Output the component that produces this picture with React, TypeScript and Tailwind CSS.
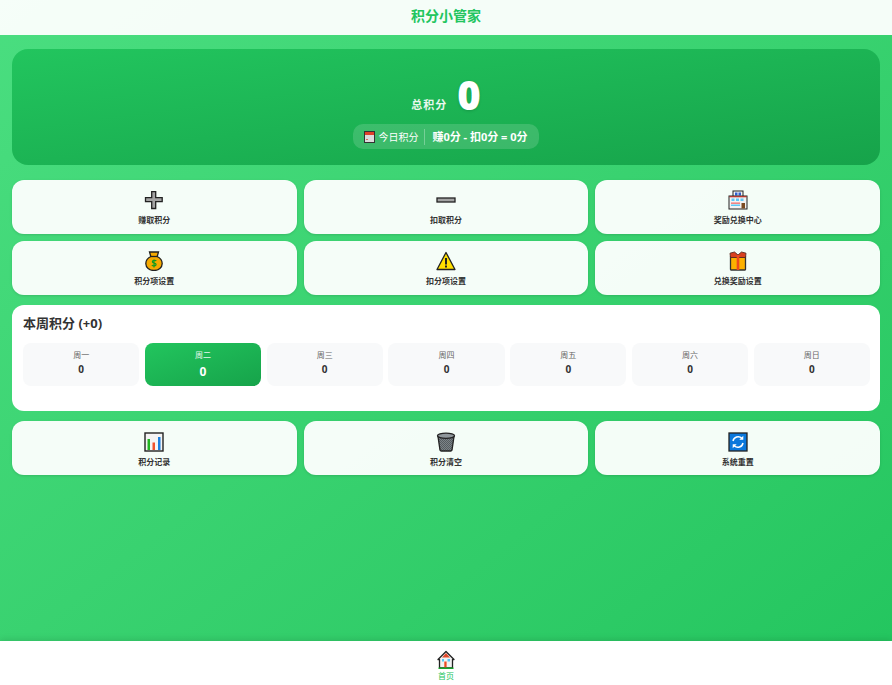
import React from "react";

const font = { fontFamily: '"Noto Sans", "Noto Sans CJK SC", sans-serif' };

function PlusIcon() {
  return (
    <svg width="20" height="20" viewBox="0 0 20 20">
      <path d="M7.700 1.700h4v6h6.500v4h-6.500v6.800h-4v-6.800H1.500v-4h6.200z" fill="#a3a3a3" stroke="#222" strokeWidth="1.300" />
    </svg>
  );
}

function MinusIcon() {
  return (
    <svg width="20" height="20" viewBox="0 0 20 20">
      <rect x="1" y="8" width="18" height="4" fill="#a3a3a3" stroke="#222" strokeWidth="1.300" />
    </svg>
  );
}

function ShopIcon() {
  return (
    <svg width="20" height="20" viewBox="0 0 20 20">
      <rect x="5" y="1" width="10" height="5.500" fill="#f2f2f2" stroke="#222" />
      <rect x="7" y="2.500" width="2.500" height="3" fill="#2f5fd0" />
      <rect x="10.500" y="2.500" width="2.500" height="3" fill="#2f5fd0" />
      <rect x="1" y="6" width="18" height="13" fill="#f2f2f2" stroke="#222" />
      <rect x="1.500" y="6" width="17" height="1.300" fill="#b3362f" />
      <rect x="3.500" y="8.500" width="3" height="2.500" fill="#5fc8f5" />
      <rect x="8" y="8.500" width="3" height="2.500" fill="#5fc8f5" />
      <rect x="12.500" y="8.500" width="3" height="2.500" fill="#5fc8f5" />
      <rect x="3" y="12.500" width="9" height="1.300" fill="#f06a6a" />
      <rect x="3" y="14.500" width="9" height="1.500" fill="#5fc8f5" />
      <rect x="13.500" y="13" width="3.500" height="5.500" fill="#7a4a21" />
    </svg>
  );
}

function BagIcon() {
  return (
    <svg width="20" height="20" viewBox="0 0 20 20">
      <path d="M5.500 1h9l-1.300 4.500c3 1.500 5 3.800 5 7 0 4-3.500 7-8.200 7s-8.200-3-8.200-7c0-3.200 2-5.500 5-7z" fill="#f6aa00" stroke="#222" strokeWidth="1.300" />
      <path d="M6.500 5.500h7" stroke="#222" strokeWidth="1.300" />
      <path d="M12.300 10c-.6-.9-3.900-1-3.900.7s3.700 1 3.700 2.800-3.500 1.700-4.200.5M10 8.500v8" fill="none" stroke="#129a20" strokeWidth="1.200" />
    </svg>
  );
}

function WarnIcon() {
  return (
    <svg width="20" height="20" viewBox="0 0 20 20">
      <path d="M10 1.500 19 18.500H1z" fill="#ffdf00" stroke="#222" strokeWidth="1.300" strokeLinejoin="round" />
      <rect x="9" y="7" width="2" height="6.500" fill="#222" />
      <rect x="9" y="14.500" width="2" height="2" fill="#222" />
    </svg>
  );
}

function GiftIcon() {
  return (
    <svg width="20" height="20" viewBox="0 0 20 20">
      <path d="M2.500 6h15v12.500a.5.500 0 0 1-.5.500H3a.5.500 0 0 1-.5-.500z" fill="#fdb100" stroke="#333" strokeWidth="1.300" />
      <path d="M2 2.200 6.500 1 10 4l3.500-3L18 2.200 17.500 6.500h-15z" fill="#d8401f" stroke="#5a2a20" strokeWidth="0.900" strokeLinejoin="round" />
      <rect x="8.700" y="4" width="2.600" height="15" fill="#ee4a1c" />
    </svg>
  );
}

function ChartIcon() {
  return (
    <svg width="20" height="20" viewBox="0 0 20 20">
      <rect x="1" y="1" width="18" height="18" fill="#f4f4f4" stroke="#222" strokeWidth="1.400" />
      <rect x="3.500" y="7" width="2.500" height="11" fill="#22b522" />
      <rect x="8.500" y="10.500" width="2.500" height="7.500" fill="#f0512d" />
      <rect x="14" y="5" width="2.500" height="13" fill="#1b7fe0" />
    </svg>
  );
}

function TrashIcon() {
  return (
    <svg width="20" height="20" viewBox="0 0 20 20">
      <defs>
        <pattern id="mesh" width="2" height="2" patternUnits="userSpaceOnUse">
          <rect width="2" height="2" fill="#7c8488" />
          <rect width="1" height="1" fill="#555c60" />
          <rect x="1" y="1" width="1" height="1" fill="#555c60" />
        </pattern>
      </defs>
      <path d="M2 4.500 4 18a1.500 1.500 0 0 0 1.500 1h9a1.500 1.500 0 0 0 1.500-1l2-13.500z" fill="url(#mesh)" stroke="#222" strokeWidth="1.300" />
      <ellipse cx="10" cy="3.800" rx="8.500" ry="2.600" fill="#8f979b" stroke="#222" strokeWidth="1.300" />
    </svg>
  );
}

function ResetIcon() {
  return (
    <svg width="20" height="20" viewBox="0 0 20 20">
      <rect x="1" y="1" width="18" height="18" fill="#0a78dc" stroke="#222" strokeWidth="1.300" />
      <path d="M5 9a5.200 5.200 0 0 1 8.800-2.700M15 11a5.200 5.200 0 0 1-8.800 2.700" fill="none" stroke="#fff" strokeWidth="1.500" />
      <path d="M15.300 3.800v4h-4zM4.700 16.200v-4h4z" fill="#fff" />
    </svg>
  );
}

function CalendarIcon() {
  return (
    <svg width="11" height="12" viewBox="0 0 11 12">
      <rect x="0.500" y="0.500" width="10" height="11" fill="#dcdcdc" stroke="#333" />
      <rect x="1" y="1" width="9" height="3" fill="#e0402a" />
      <rect x="2" y="8" width="2" height="1" fill="#d96a5c" />
    </svg>
  );
}

function HomeIcon() {
  return (
    <svg width="20" height="20" viewBox="0 0 20 20">
      <path d="M10 1.500 2 9.500h1.500V18h13V9.500H18z" fill="#f2f2f2" stroke="#222" strokeWidth="1.300" strokeLinejoin="round" />
      <path d="M10 3 6 7.500h8z" fill="#e24a2b" />
      <rect x="8.300" y="11.500" width="2.300" height="6" fill="#ef4a23" />
      <rect x="6" y="9" width="2" height="2.500" fill="#58c5f5" />
      <rect x="11.500" y="9" width="2.500" height="2.500" fill="#58c5f5" />
      <rect x="2.500" y="17.500" width="15" height="1.500" fill="#18a52c" />
    </svg>
  );
}

function ActionCard({ icon, label, low }: { icon: React.ReactNode; label: string; low?: boolean }) {
  return (
    <button className={low ? "flex h-[54px] flex-col items-center rounded-[12px] bg-white/95 pt-[11px] shadow-sm" : "flex h-[54px] flex-col items-center rounded-[12px] bg-white/95 pt-[10px] shadow-sm"}>
      <span className="flex h-[20px] items-center">{icon}</span>
      <span className="mt-[4px] text-[8px] font-semibold leading-[12px] text-[#333]">{label}</span>
    </button>
  );
}

const days = ["周一", "周二", "周三", "周四", "周五", "周六", "周日"];

export default function App() {
  return (
    <div className="flex h-screen flex-col overflow-hidden bg-gradient-to-br from-[#4ade80] to-[#22c55e]" style={font}>
      <header className="flex h-[35px] shrink-0 items-center justify-center bg-white/95 pb-[4px]">
        <h1 className="text-[14px] font-bold text-[#22c55e]">积分小管家</h1>
      </header>

      <main className="flex flex-1 flex-col px-[12px] pt-[14px]">
        <section className="flex h-[116px] flex-col items-center rounded-[16px] bg-gradient-to-br from-[#22c55e] to-[#16a34a] pt-[23px] text-white">
          <div className="flex h-[46px] items-end gap-[10px]">
            <span className="mb-[6px] text-[11px] font-bold leading-[14px] tracking-[1px] text-white/90">总积分</span>
            <span className="text-[40px] font-black leading-[46px] [text-shadow:0_1px_3px_rgba(0,0,0,0.15)]">0</span>
          </div>
          <div className="mt-[6px] flex h-[25px] w-[186px] items-center justify-center rounded-[10px] bg-white/15 pt-[1px]">
            <CalendarIcon />
            <span className="ml-[3px] text-[10px]">今日积分</span>
            <span className="ml-[6px] h-[16px] w-px bg-white/30" />
            <span className="ml-[7px] text-[11px] font-bold">赚0分 - 扣0分 = 0分</span>
          </div>
        </section>

        <div className="mt-[15px] grid grid-cols-3 gap-x-[7px] gap-y-[7px]">
          <ActionCard icon={<PlusIcon />} label="赚取积分" />
          <ActionCard icon={<MinusIcon />} label="扣取积分" />
          <ActionCard icon={<ShopIcon />} label="奖励兑换中心" />
          <ActionCard icon={<BagIcon />} label="积分项设置" />
          <ActionCard icon={<WarnIcon />} label="扣分项设置" />
          <ActionCard icon={<GiftIcon />} label="兑换奖励设置" />
        </div>

        <section className="mt-[10px] h-[106px] rounded-[12px] bg-white pl-[11px] pr-[10px] pt-[9px]">
          <h2 className="text-[13px] font-bold leading-[18px] text-[#333]">本周积分 (+0)</h2>
          <div className="mt-[11px] grid grid-cols-7 gap-[5.500px]">
            {days.map((day) =>
              day === "周二" ? (
                <div key={day} className="flex h-[43px] flex-col items-center rounded-[8px] bg-gradient-to-br from-[#22c55e] to-[#16a34a] pt-[6px] text-white">
                  <span className="text-[8px] leading-[12px] text-white/90">{day}</span>
                  <span className="mt-[3px] text-[12px] font-bold leading-[16px]">0</span>
                </div>
              ) : (
                <div key={day} className="flex h-[43px] flex-col items-center rounded-[8px] bg-[#f8f9fa] pt-[6px]">
                  <span className="text-[8px] leading-[12px] text-[#666]">{day}</span>
                  <span className="mt-[1px] text-[10px] font-bold leading-[15px] text-[#333]">0</span>
                </div>
              )
            )}
          </div>
        </section>

        <div className="mt-[10px] grid grid-cols-3 gap-x-[7px]">
          <ActionCard low icon={<ChartIcon />} label="积分记录" />
          <ActionCard low icon={<TrashIcon />} label="积分清空" />
          <ActionCard low icon={<ResetIcon />} label="系统重置" />
        </div>
      </main>

      <nav className="flex h-[44px] shrink-0 flex-col items-center bg-white pt-[9px] shadow-[0_-2px_6px_rgba(0,0,0,0.1)]">
        <HomeIcon />
        <span className="text-[8px] leading-[11px] text-[#22c55e]">首页</span>
      </nav>
    </div>
  );
}
